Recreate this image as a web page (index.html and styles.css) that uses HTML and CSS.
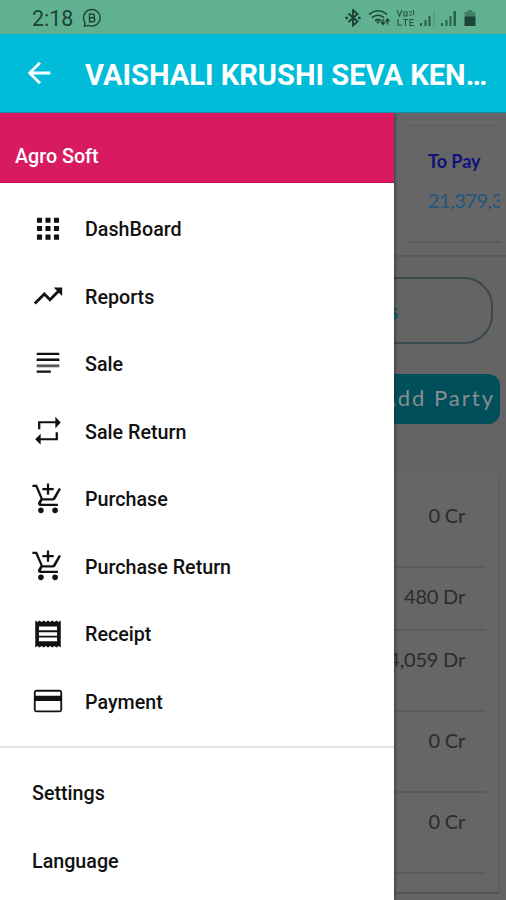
FILE: index.html
```html
<!DOCTYPE html>
<html lang="en">
<head>
<meta charset="utf-8">
<meta name="viewport" content="width=device-width">
<title>Agro Soft</title>
<link rel="stylesheet" href="styles.css">
</head>
<body>
<div class="statusbar">
  <span class="clock">2:18</span>
  <svg class="chat" viewBox="0 0 20 20" fill="none" stroke="currentColor" stroke-width="1.4"><path d="M2.500 18.200l.3-4A8.300 8.300 0 1 1 6.500 17.400z"/><path d="M7.500 6h3a1.900 1.900 0 0 1 0 3.800h-3zM7.500 9.800h3.300a2 2 0 0 1 0 4H7.500z"/></svg>
  <svg class="tray" viewBox="0 0 132 18" fill="none" stroke="currentColor">
    <path d="M3.500 4.500l9 8-4.500 4V1l4.500 4-9 8" stroke-width="1.900"/><circle cx="1.700" cy="9" r="1.400" fill="currentColor" stroke="none"/><circle cx="14.300" cy="9" r="1.400" fill="currentColor" stroke="none"/>
    <path d="M24 5.300q9-7 18 0M27 8.600q6-4.800 12 0M30 11.800q3-2.400 6 0" stroke-width="1.600"/><path d="M31 12.500h4l-2 2.500z" fill="currentColor" stroke="none"/><path d="M38 10v5m-2-2l2 2.500 2-2.500M42.500 15.500v-5m-2 2l2-2.500 2 2.500" stroke-width="1.300"/>
    <path d="M52 1l2.500 6L57 1M59 3h3v4h-3zM64 3h3M64 6h3M68.500 1v5M53 10v6.300h4M58 10.500h5M60.500 10.500v6.500M69 10.500h-4v6h4M65 13.500h3.500" stroke-width="1.100" opacity=".85"/>
    <g fill="currentColor" stroke="none"><path opacity=".8" d="M75 14h2v3h-2zM79.500 11h2v6h-2zM83.500 7h2v10h-2z"/><path opacity=".15" d="M88 2h2v15h-2z"/><path d="M96 14h2v3h-2zM100.500 11h2v6h-2zM104.500 7h2v10h-2zM108.500 2h2.500v15h-2.500z" opacity=".75"/><path opacity=".45" d="M122.500 1h5v2h3v5h-11V3h3z"/><path d="M119.500 7.500h11V17h-11z"/></g>
  </svg>
</div>
<header class="appbar">
  <svg class="icon" viewBox="0 0 24 24"><path d="M20 11H7.830l5.590-5.590L12 4l-8 8 8 8 1.410-1.410L7.830 13H20v-2z"/></svg>
  <h1>VAISHALI KRUSHI SEVA KEN…</h1>
</header>
<div class="stage">
  <main class="page">
    <section class="summary"><div class="pay"><b>To Pay</b><span>21,379,3</span></div></section>
    <section class="actions"><div class="outline">s</div><div class="add">Add Party</div></section>
    <section class="ledger">
      <div class="entry first">0 Cr</div>
      <div class="entry short">480 Dr</div>
      <div class="entry">4,059 Dr</div>
      <div class="entry">0 Cr</div>
      <div class="entry">0 Cr</div>
    </section>
  </main>
  <aside class="drawer">
    <div class="brand">Agro Soft</div>
    <nav class="menu">
      <a><svg class="icon" viewBox="0 0 24 24"><path d="M4.200 4h3.600v3.600H4.200zM10.200 4h3.600v3.600h-3.600zM16.200 4h3.600v3.600h-3.600zM4.200 9.800h3.600v3.600H4.200zM10.200 9.800h3.600v3.600h-3.600zM16.200 9.800h3.600v3.600h-3.600zM4.200 15.900h3.600v3.600H4.200zM10.200 15.900h3.600v3.600h-3.600zM16.200 15.900h3.600v3.600h-3.600z"/></svg><span>DashBoard</span></a>
      <a><svg class="icon" viewBox="0 0 24 24"><path d="M16 6l2.290 2.290-4.880 4.880-4-4L2 16.590 3.410 18l6-6 4 4 6.300-6.290L22 12V6z"/></svg><span>Reports</span></a>
      <a><svg class="icon" viewBox="0 0 24 24"><path d="M4 4h16v1.600H4zM4 8.200h16v1.600H4zM4 16.600h10v1.600H4z"/><path opacity=".7" d="M4 12.300h16v2H4z"/></svg><span>Sale</span></a>
      <a><svg class="icon" viewBox="0 0 24 24"><path d="M6.600 6.600h10.600V10l3.800-4-3.800-4v3.200H5v5.600h1.600zM17.400 17.100H6.800V14L3 17.900l3.800 3.800v-3.100H19v-5.700h-1.600z"/></svg><span>Sale Return</span></a>
      <a><svg class="icon" viewBox="0 0 24 24"><path d="M11.200 9h1.600V5.800H16V4.200h-3.200V1h-1.600v3.200H8v1.600h3.200zM7 18a2 2 0 1 0 0 4 2 2 0 0 0 0-4zm10 0a2 2 0 1 0 0 4 2 2 0 0 0 0-4zm-9.830-3.250l.03-.12.900-1.630h7.450c.75 0 1.410-.41 1.750-1.030l3.860-7.010L19.700 4.200l-4.300 7.200H8.300L5.210 4l-.94-2H1v1.600h2.200l3.500 7.990-1.450 2.450c-.9 1.560.2 2.960 1.750 2.960h12v-1.600H7.420c-.25 0-.35-.4-.25-.65z"/></svg><span>Purchase</span></a>
      <a><svg class="icon" viewBox="0 0 24 24"><path d="M11.200 9h1.600V5.800H16V4.200h-3.200V1h-1.600v3.200H8v1.600h3.200zM7 18a2 2 0 1 0 0 4 2 2 0 0 0 0-4zm10 0a2 2 0 1 0 0 4 2 2 0 0 0 0-4zm-9.830-3.250l.03-.12.900-1.630h7.450c.75 0 1.410-.41 1.750-1.030l3.860-7.010L19.700 4.200l-4.300 7.200H8.300L5.210 4l-.94-2H1v1.600h2.200l3.500 7.990-1.450 2.450c-.9 1.560.2 2.960 1.750 2.960h12v-1.600H7.420c-.25 0-.35-.4-.25-.65z"/></svg><span>Purchase Return</span></a>
      <a><svg class="icon" viewBox="0 0 24 24"><path d="M18.400 17.100H5.600v-2.700h12.800zM18.400 13.200H5.600v-2.500h12.800zM18.400 9.400H5.600V6.700h12.800zM3 21.500l1.500-1 1.500 1 1.500-1 1.500 1 1.500-1 1.500 1 1.500-1 1.500 1 1.500-1 1.500 1 1.500-1 1.500 1v-19l-1.500 1-1.500-1-1.500 1-1.500-1-1.500 1-1.500-1-1.500 1-1.500-1-1.500 1-1.500-1-1.500 1-1.500-1z" fill-rule="evenodd"/></svg><span>Receipt</span></a>
      <a><svg class="icon" viewBox="0 0 24 24"><path d="M20 4H4c-1.110 0-1.990.89-1.990 2L2 18c0 1.110.89 2 2 2h16c1.110 0 2-.89 2-2V6c0-1.110-.89-2-2-2zm.7 14.700H3.300V12h17.400zm0-10.400H3.300V5.400h17.400z"/></svg><span>Payment</span></a>
    </nav>
    <nav class="menu extra"><a>Settings</a><a>Language</a></nav>
  </aside>
</div>
</body>
</html>
```

FILE: styles.css
```css
* { box-sizing: border-box; }
body {
  margin: 0;
  height: 900px;
  overflow: hidden;
  display: flex;
  flex-direction: column;
  font-family: Roboto, sans-serif;
  background: #666;
}
.icon { width: 34px; height: 34px; flex: none; fill: currentColor; }

.statusbar {
  height: 34px;
  flex: none;
  display: flex;
  align-items: center;
  padding: 1px 29px 0 32px;
  background: #60b092;
  color: #1c4437;
}
.clock { font-size: 21.500px; line-height: 34px; width: 50px; padding-top: 2px; }
.chat { width: 20px; height: 20px; }
.tray { width: 132px; height: 18px; margin-left: auto; }

.appbar {
  height: 79px;
  flex: none;
  display: flex;
  align-items: center;
  padding: 0 10px 0 22px;
  background: #00bcd9;
  border-bottom: 1px solid #168da5;
  color: #fff;
}
.appbar h1 {
  margin: 3px 0 0 29px;
  flex: 1;
  font-size: 29.1px;
  font-weight: 700;
  white-space: nowrap;
}

.stage { position: relative; flex: 1; overflow: hidden; }
.drawer {
  position: absolute;
  inset: 0 auto 0 0;
  width: 394px;
  background: #fff;
  box-shadow: 0 0 4px 0 #222;
}
.brand {
  height: 70px;
  padding: 32px 15px 0;
  background: #d81b60;
  border-bottom: 1px solid #c60c50;
  color: #fff;
  font-size: 19.7px;
  font-weight: 500;
  line-height: 24px;
}
.menu { padding: 12px 0 11px; }
.menu a {
  height: 67.5px;
  display: flex;
  align-items: center;
  gap: 20px;
  padding-left: 31px;
  color: #111;
  font-size: 19.7px;
  font-weight: 500;
}
.menu span { padding-top: 2px; }
.extra { border-top: 2px solid #e3e3e3; }
.extra a { padding-left: 32px; }

.page {
  height: 100%;
  padding-right: 6px;
  background: #646464;
  color: #2b2b2b;
  font-family: Lato, sans-serif;
}
.summary {
  height: 144px;
  margin-right: -6px;
  padding: 12px 6px 0 408px;
  background: #666;
  border-bottom: 2px solid #5b5b5b;
}
.pay {
  height: 118px;
  padding: 23px 0 0 20px;
  border-top: 1px solid #5c5c5c;
  border-bottom: 2px solid #5b5b5b;
  overflow: hidden;
}
.pay b, .pay span { display: block; font-size: 18px; line-height: 24px; color: #11117a; }
.pay span { margin-top: 15px; font-size: 20px; letter-spacing: -.5px; color: #205783; }
.actions { padding-top: 20px; }
.outline {
  height: 67px;
  margin-right: 7px;
  padding-right: 93px;
  border: 2px solid #39494d;
  border-radius: 29px;
  color: #075b69;
  font-size: 20px;
  font-weight: 700;
  line-height: 64px;
  text-align: right;
}
.add {
  height: 50px;
  margin-top: 30px;
  padding-right: 5px;
  border-radius: 12px;
  background: #004f5b;
  color: #888d8e;
  font-size: 22px;
  line-height: 48px;
  letter-spacing: 2px;
  text-align: right;
}
.ledger {
  height: 419px;
  margin-top: 51px;
  padding: 0 12px 0 300px;
  background: #666;
  border-right: 2px solid #5e5e5e;
  border-bottom: 2px solid #565656;
  border-radius: 3px;
}
.entry {
  height: 81px;
  padding: 16px 21px 0 0;
  border-bottom: 2px solid #5b5b5b;
  font-size: 20px;
  line-height: 24px;
  letter-spacing: -.2px;
  text-align: right;
}
.first { height: 93px; padding-top: 28px; }
.short { height: 63px; }
```
